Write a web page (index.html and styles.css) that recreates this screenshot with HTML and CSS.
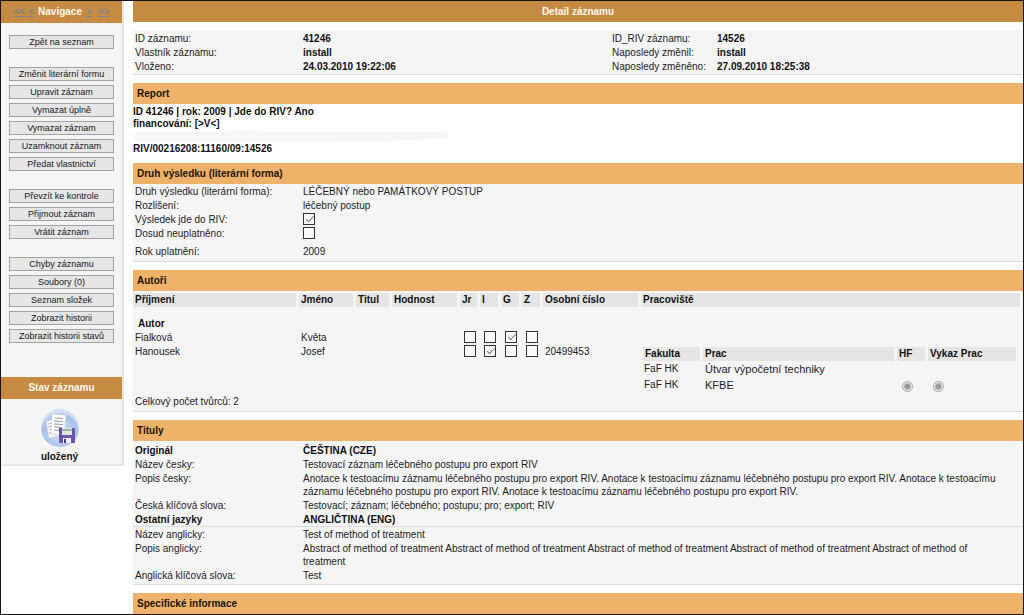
FILE: index.html
```html
<!DOCTYPE html>
<html lang="cs">
<head>
<meta charset="utf-8">
<title>Detail záznamu</title>
<link rel="stylesheet" href="styles.css">
</head>
<body>
<div class="page">
  <aside class="sidebar">
    <h2 class="side-title"><span class="step"><a href="#first">&lt;&lt;</a><a href="#prev">&lt;</a></span><span>Navigace</span><span class="step next"><a href="#next">&gt;</a><a href="#last">&gt;&gt;</a></span></h2>
    <nav class="side-nav">
      <div class="group">
        <button type="button">Zpět na seznam</button>
      </div>
      <div class="group">
        <button type="button">Změnit literární formu</button>
        <button type="button">Upravit záznam</button>
        <button type="button">Vymazat úplně</button>
        <button type="button">Vymazat záznam</button>
        <button type="button">Uzamknout záznam</button>
        <button type="button">Předat vlastnictví</button>
      </div>
      <div class="group">
        <button type="button">Převzít ke kontrole</button>
        <button type="button">Přijmout záznam</button>
        <button type="button">Vrátit záznam</button>
      </div>
      <div class="group">
        <button type="button">Chyby záznamu</button>
        <button type="button">Soubory (0)</button>
        <button type="button">Seznam složek</button>
        <button type="button">Zobrazit historii</button>
        <button type="button">Zobrazit historii stavů</button>
      </div>
    </nav>
    <h2 class="side-title">Stav záznamu</h2>
    <div class="state">
      <svg width="40" height="40" viewBox="0 0 40 40" aria-hidden="true">
        <defs>
          <radialGradient id="disc" cx="50%" cy="60%" r="52%">
            <stop offset="0" stop-color="#dbe6f8"/>
            <stop offset="0.6" stop-color="#b4cbef"/>
            <stop offset="0.88" stop-color="#a6c1eb"/>
            <stop offset="1" stop-color="#d3e0f4"/>
          </radialGradient>
        </defs>
        <circle cx="20" cy="20" r="19" fill="url(#disc)"/>
        <path d="M6 13 15 11 18 28 9 30Z" fill="#fafafa" stroke="#c8ccd4" stroke-width=".6"/>
        <path d="M8 16l5-1M8 19l5-1M9 22l5-1M9 25l5-1" stroke="#9a9fa8" stroke-width=".8"/>
        <path d="M12 6 26 7 24 27 11 26Z" fill="#fff" stroke="#c4c8d0" stroke-width=".6"/>
        <path d="M15 10l8 .5M14 13l9 .5M14 16l9 .5M14 19l8 .5M14 22l6 .4" stroke="#858a93" stroke-width=".9"/>
        <path d="M19 20H34L35 21V35H20L19 34Z" fill="#6c55a8"/>
        <path d="M22 20H32V27H22Z" fill="#dceade"/>
        <path d="M22 21H32V23H22Z" fill="#8fc19b"/>
        <path d="M23 30H31V35H23Z" fill="#f0f0f6"/>
        <path d="M24 31H26V35H24Z" fill="#4d3a86"/>
      </svg>
      <strong>uložený</strong>
    </div>
  </aside>

  <main class="main">
    <h1 class="title">Detail záznamu</h1>

    <section class="panel info">
      <table class="kv">
        <tr><th>ID záznamu:</th><td>41246</td></tr>
        <tr><th>Vlastník záznamu:</th><td>install</td></tr>
        <tr><th>Vloženo:</th><td>24.03.2010 19:22:06</td></tr>
      </table>
      <table class="kv short">
        <tr><th>ID_RIV záznamu:</th><td>14526</td></tr>
        <tr><th>Naposledy změnil:</th><td>install</td></tr>
        <tr><th>Naposledy změněno:</th><td>27.09.2010 18:25:38</td></tr>
      </table>
    </section>

    <section>
      <h2 class="bar">Report</h2>
      <div class="report">
        <p>ID 41246 | rok: 2009 | Jde do RIV? Ano</p>
        <p>financování: [&gt;V&lt;]</p>
        <svg class="blank" width="320" height="13" viewBox="0 0 320 13" aria-hidden="true"><path d="M4 2H90Q110-1 132 2H312Q318 5 314 9L270 10Q240 13 200 11H4Q-3 6 4 2Z" fill="#f6f6f6"/></svg>
        <p>RIV/00216208:11160/09:14526</p>
      </div>
    </section>

    <section>
      <h2 class="bar">Druh výsledku (literární forma)</h2>
      <div class="panel kind">
        <table class="kv">
          <tr><th>Druh výsledku (literární forma):</th><td>LÉČEBNÝ nebo PAMÁTKOVÝ POSTUP</td></tr>
          <tr><th>Rozlišení:</th><td>léčebný postup</td></tr>
          <tr><th><label for="riv">Výsledek jde do RIV:</label></th><td><input id="riv" type="checkbox" checked></td></tr>
          <tr><th><label for="unused">Dosud neuplatněno:</label></th><td><input id="unused" type="checkbox"></td></tr>
          <tr class="spaced"><th>Rok uplatnění:</th><td>2009</td></tr>
        </table>
      </div>
    </section>

    <section>
      <h2 class="bar">Autoři</h2>
      <div class="panel people">
        <table class="authors">
          <colgroup><col class="c-last"><col class="c-first"><col class="c-tit"><col class="c-rank"><col class="c-jr"><col class="c-flag"><col class="c-flag"><col class="c-flag"><col class="c-num"><col></colgroup>
          <thead>
            <tr><th>Příjmení</th><th>Jméno</th><th>Titul</th><th>Hodnost</th><th>Jr</th><th>I</th><th>G</th><th>Z</th><th>Osobní číslo</th><th>Pracoviště</th></tr>
          </thead>
          <tbody>
            <tr class="role"><td colspan="10">Autor</td></tr>
            <tr><td>Fialková</td><td>Květa</td><td></td><td></td><td><input type="checkbox" aria-label="Jr"></td><td><input type="checkbox" aria-label="I"></td><td><input type="checkbox" aria-label="G" checked></td><td><input type="checkbox" aria-label="Z"></td><td></td><td></td></tr>
            <tr><td>Hanousek</td><td>Josef</td><td></td><td></td><td><input type="checkbox" aria-label="Jr"></td><td><input type="checkbox" aria-label="I" checked></td><td><input type="checkbox" aria-label="G"></td><td><input type="checkbox" aria-label="Z"></td><td>20499453</td>
              <td class="nest">
                <table class="places">
                  <colgroup><col class="c-fac"><col><col class="c-hf"><col class="c-rep"></colgroup>
                  <thead><tr><th>Fakulta</th><th>Prac</th><th>HF</th><th>Vykaz Prac</th></tr></thead>
                  <tbody>
                    <tr><td>FaF HK</td><td class="unit"><span>Útvar výpočetní techniky</span></td><td></td><td></td></tr>
                    <tr><td>FaF HK</td><td class="unit">KFBE</td><td><input type="radio" name="hf" aria-label="HF" checked></td><td><input type="radio" name="rep" aria-label="Vykaz Prac" checked></td></tr>
                  </tbody>
                </table>
              </td></tr>
          </tbody>
        </table>
        <p class="total">Celkový počet tvůrců: 2</p>
      </div>
    </section>

    <section>
      <h2 class="bar">Tituly</h2>
      <div class="panel titles">
        <table class="kv">
          <tbody>
            <tr class="lang"><th>Originál</th><td>ČEŠTINA (CZE)</td></tr>
            <tr><th>Název česky:</th><td>Testovací záznam léčebného postupu pro export RIV</td></tr>
            <tr><th>Popis česky:</th><td>Anotace k testoacímu záznamu léčebného postupu pro export RIV. Anotace k testoacímu záznamu léčebného postupu pro export RIV. Anotace k testoacímu záznamu léčebného postupu pro export RIV. Anotace k testoacímu záznamu léčebného postupu pro export RIV.</td></tr>
            <tr><th>Česká klíčová slova:</th><td>Testovací; záznam; léčebného; postupu; pro; export; RIV</td></tr>
          </tbody>
          <tbody>
            <tr class="lang ruled"><th>Ostatní jazyky</th><td>ANGLIČTINA (ENG)</td></tr>
            <tr><th>Název anglicky:</th><td>Test of method of treatment</td></tr>
            <tr><th>Popis anglicky:</th><td>Abstract of method of treatment Abstract of method of treatment Abstract of method of treatment Abstract of method of treatment Abstract of method of treatment</td></tr>
            <tr><th>Anglická klíčová slova:</th><td>Test</td></tr>
          </tbody>
        </table>
      </div>
    </section>

    <section>
      <h2 class="bar">Specifické informace</h2>
    </section>
  </main>
</div>
</body>
</html>
```
FILE: styles.css
```css
* {
  box-sizing: border-box;
}

body {
  margin: 0;
  background: #fff;
  color: #1c1c24;
  font: 10px/13px "Liberation Sans", Arial, sans-serif;
}

h1, h2, p {
  margin: 0;
  font-size: 10px;
}

.page {
  display: flex;
  align-items: flex-start;
  gap: 9px;
  min-height: 100vh;
  border: 1px solid #1a1410;
}

/* Sidebar */
.sidebar {
  flex: 0 0 123px;
  min-width: 0;
  background: #f5f5f5;
  border-right: 2px solid #e4e6ea;
  border-bottom: 2px solid #e4e6ea;
}

.side-title {
  display: flex;
  justify-content: center;
  gap: 4px;
  background: #c68b43;
  color: #fff8ee;
  line-height: 22px;
  white-space: nowrap;
}

.step {
  display: flex;
  gap: 3px;
}

.next {
  gap: 6px;
}

.step a {
  color: #7d8585;
}

.side-nav {
  display: flex;
  flex-direction: column;
  gap: 18px;
  padding: 12px 8px 34px;
}

.group {
  display: flex;
  flex-direction: column;
  gap: 4px;
}

.group button {
  height: 14px;
  padding: 0;
  border: 1px solid #a3a3a3;
  background: #e6e6e6;
  color: #16161c;
  font: 9px/12px "Liberation Sans", Arial, sans-serif;
  white-space: nowrap;
}

.state {
  display: flex;
  flex-direction: column;
  align-items: center;
  gap: 2px;
  padding: 9px 4px 1px 0;
  color: #111;
}

/* Main column */
.main {
  flex: 1;
  min-width: 0;
  display: flex;
  flex-direction: column;
  gap: 8px;
}

.title {
  background: #c68b43;
  color: #fff8ee;
  line-height: 21px;
  text-align: center;
}

.bar {
  padding: 0 4px;
  background: #efb26b;
  color: #1c1206;
  line-height: 21px;
}

.panel {
  background: #f5f5f5;
  border-bottom: 1px solid #d9dce2;
}

.kv {
  width: 100%;
  border-collapse: collapse;
  table-layout: fixed;
}

.kv th,
.kv td {
  padding: 1px 0 0 2px;
  font-weight: normal;
  text-align: left;
  vertical-align: top;
}

.kv th {
  width: 168px;
}

.kv td {
  padding-right: 20px;
}

.info {
  display: grid;
  grid-template-columns: 477fr 413fr;
  padding: 1px 0;
}

.info td {
  color: #111;
  font-weight: bold;
}

.short th {
  width: 105px;
}

.report {
  padding-top: 2px;
  color: #111;
  font-weight: bold;
  line-height: 12px;
}

.blank {
  display: block;
}

.kind {
  padding-bottom: 2px;
}

.kind .spaced th,
.kind .spaced td {
  padding-top: 5px;
}

.kind .spaced {
  height: 19px;
}

input {
  appearance: none;
  display: block;
  position: relative;
  width: 12px;
  height: 12px;
  margin: 0;
}

input[type="checkbox"] {
  border: 1px solid #333;
  background: #fafafa;
}

input[type="checkbox"]:checked::before {
  content: "";
  position: absolute;
  left: 2px;
  top: 2px;
  width: 7px;
  height: 3px;
  border-left: 1px solid #777;
  border-bottom: 1px solid #777;
  transform: rotate(-45deg);
}

input[type="radio"] {
  width: 11px;
  height: 11px;
  border: 1px solid #a5a5a5;
  border-radius: 50%;
  background: radial-gradient(circle, #999 0 2px, #b4b4b4 3px, #eee 4px);
}

.kind tr {
  height: 14px;
}

.people {
  padding: 2px 0;
}

.authors,
.places {
  width: 100%;
  border-collapse: separate;
  border-spacing: 0;
  table-layout: fixed;
}

.authors th,
.authors td {
  height: 14px;
  padding: 0 0 0 2px;
  line-height: 14px;
  text-align: left;
  vertical-align: top;
}

.authors th {
  background: #e5e5e5;
  border-right: 3px solid #f5f5f5;
  color: #111;
  white-space: nowrap;
}

.authors .role td {
  height: 24px;
  padding: 10px 0 0 5px;
  color: #111;
  font-weight: bold;
}

.authors input[type="checkbox"] {
  margin-left: 2px;
}

.c-last { width: 166px; }
.c-first { width: 57px; }
.c-tit { width: 36px; }
.c-rank { width: 68px; }
.c-jr { width: 20px; }
.c-flag { width: 21px; }
.c-num { width: 98px; }

.authors td.nest {
  padding: 2px 4px 1px 2px;
}

.c-fac { width: 60px; }
.c-hf { width: 31px; }
.c-rep { width: 91px; }

.places tbody td {
  height: 16px;
  padding-left: 1px;
  line-height: 16px;
}

.places tbody input {
  margin: 4px 0 0 4px;
}

.places .unit {
  padding-left: 2px;
  font-size: 11px;
}

.unit span {
  display: block;
  width: 120px;
  overflow: hidden;
  white-space: nowrap;
}

.total {
  padding: 1px 0 1px 2px;
}

.titles {
  padding: 2px 0;
}

.lang th,
.lang td {
  color: #111;
  font-weight: bold;
}

.ruled th,
.ruled td {
  border-bottom: 1px solid #dcdde2;
}
```
